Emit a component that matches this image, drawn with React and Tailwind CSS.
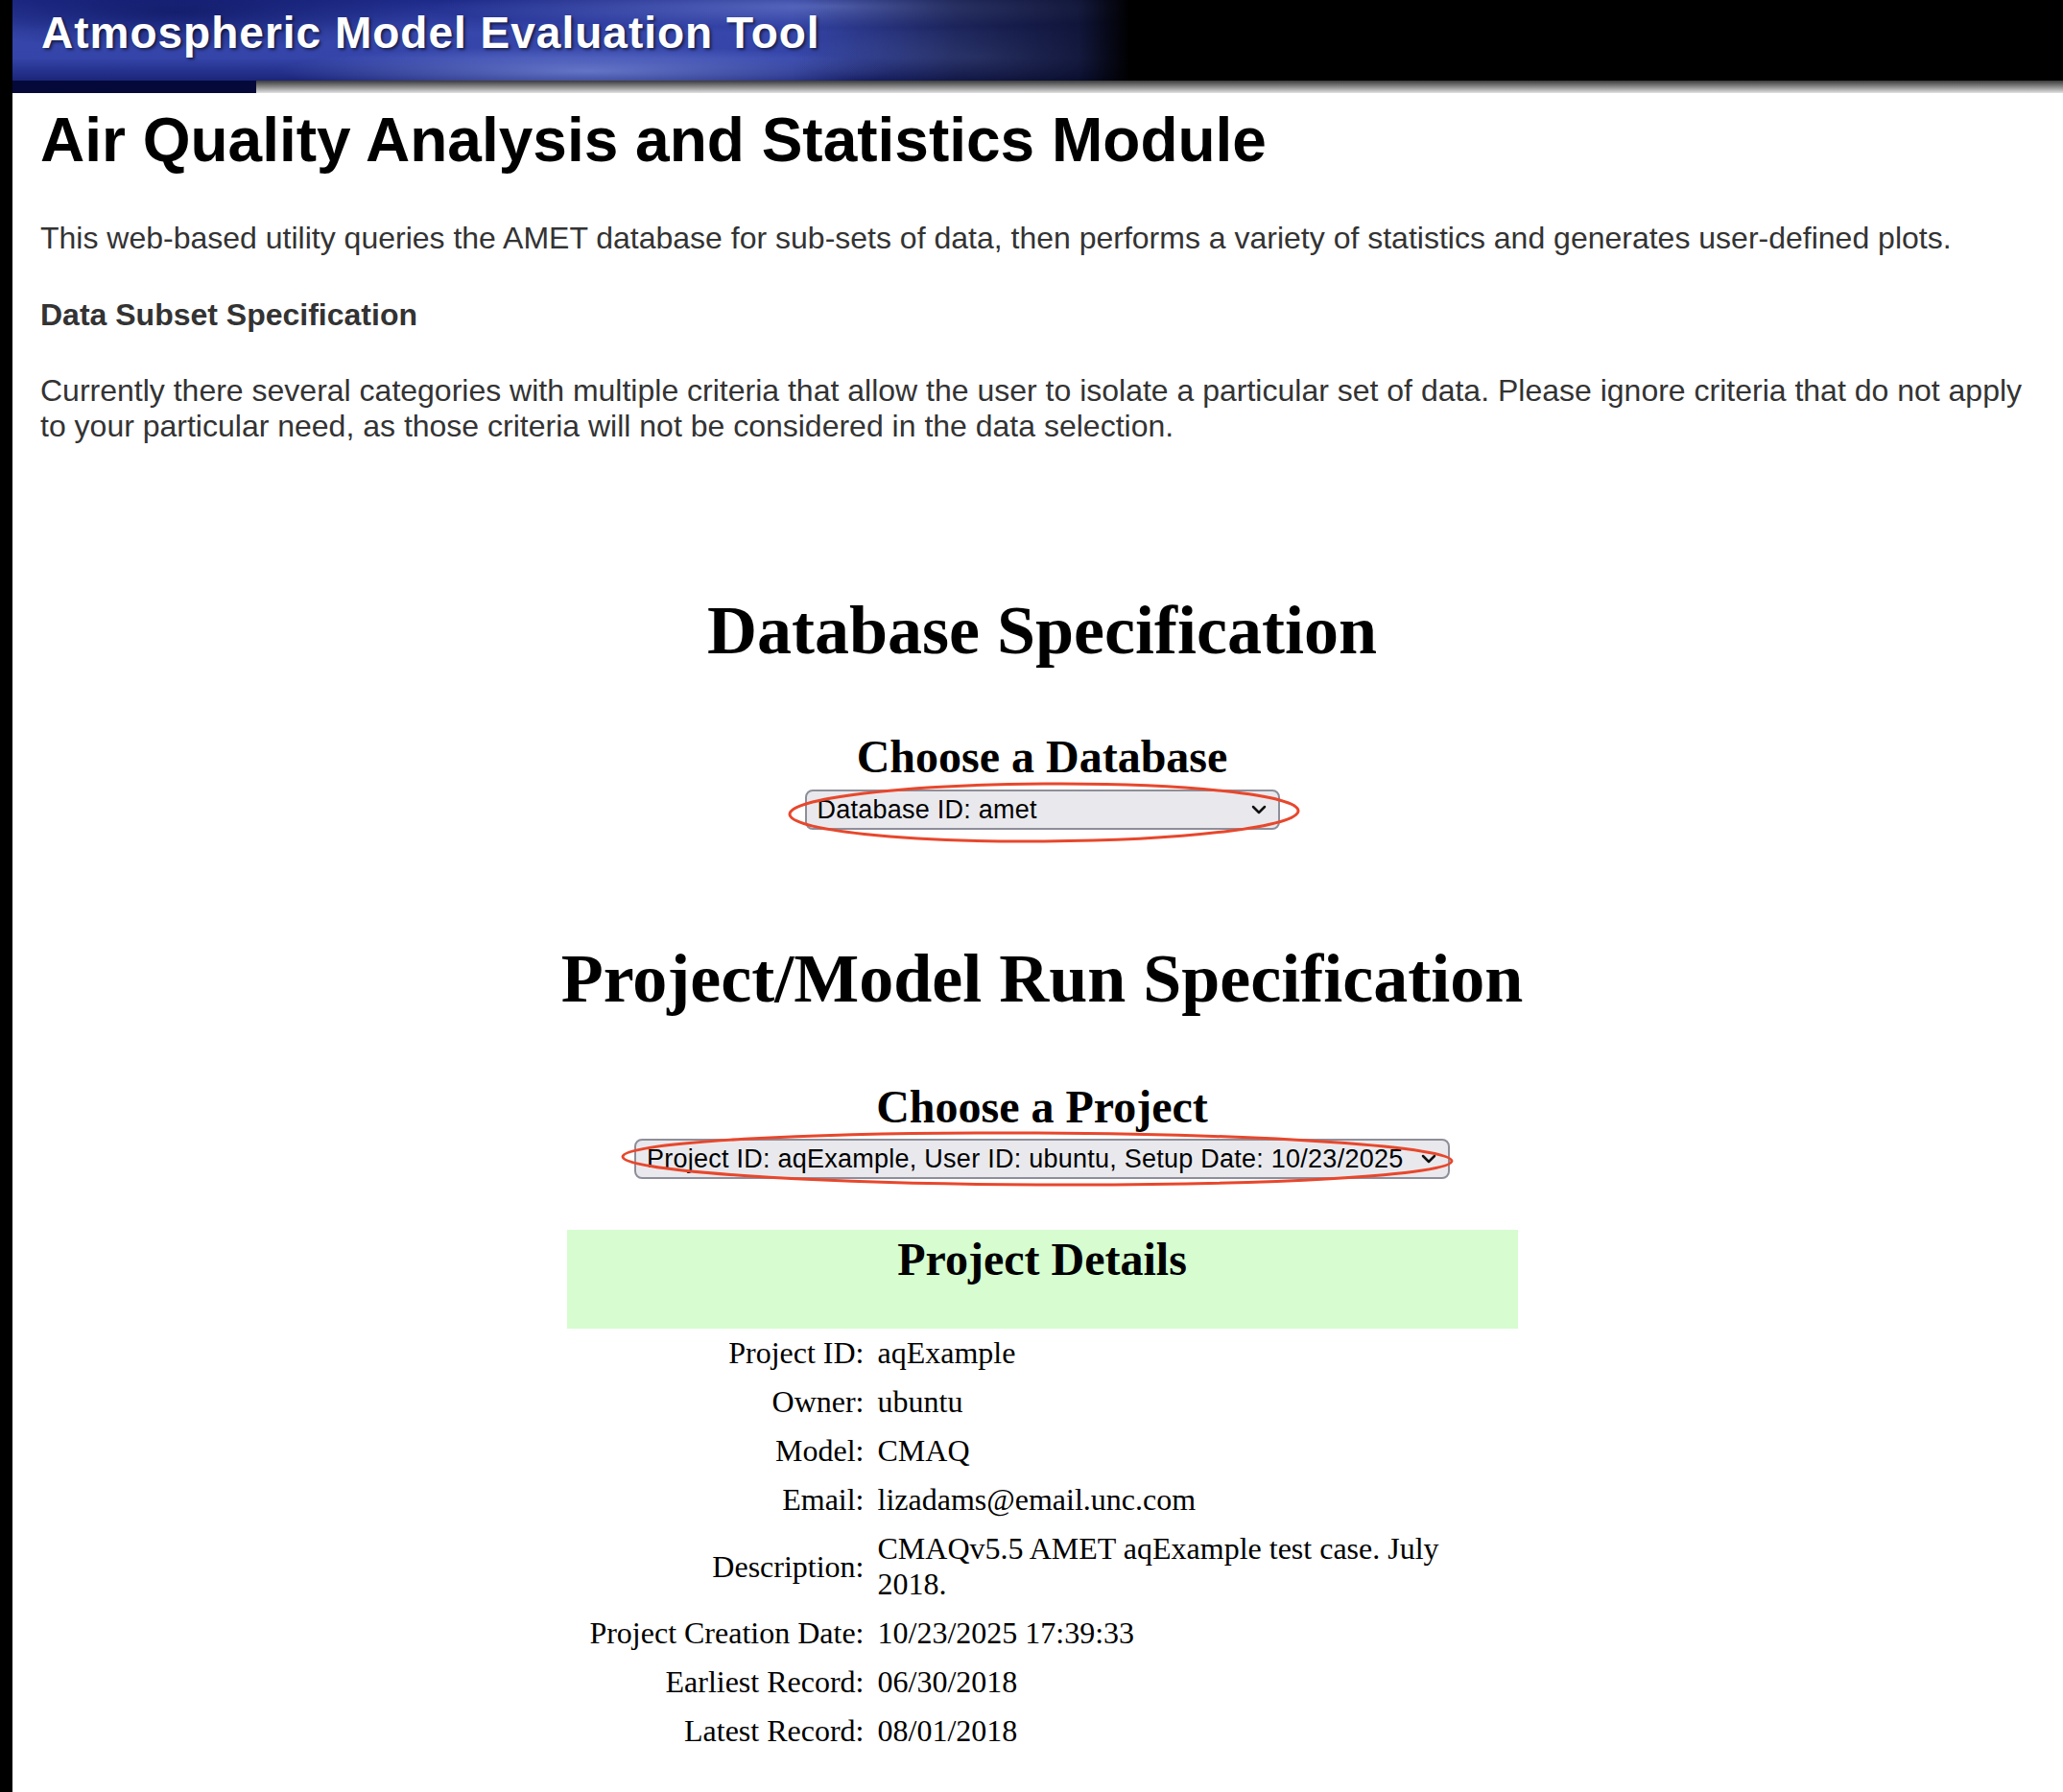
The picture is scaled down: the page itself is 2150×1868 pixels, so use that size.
import React from 'react';

const details = [
  { label: 'Project ID:', value: 'aqExample' },
  { label: 'Owner:', value: 'ubuntu' },
  { label: 'Model:', value: 'CMAQ' },
  { label: 'Email:', value: 'lizadams@email.unc.com' },
  { label: 'Description:', value: 'CMAQv5.5 AMET aqExample test case. July 2018.' },
  { label: 'Project Creation Date:', value: '10/23/2025 17:39:33' },
  { label: 'Earliest Record:', value: '06/30/2018' },
  { label: 'Latest Record:', value: '08/01/2018' },
];

function Banner() {
  return (
    <div>
      <div className="h-[84px] bg-[image:linear-gradient(90deg,rgba(0,0,0,0)_0%,rgba(0,0,0,0)_38%,rgba(0,0,0,0.45)_46%,rgba(0,0,0,0.62)_52%,#000_54.5%),radial-gradient(ellipse_320px_26px_at_28%_88%,rgba(150,170,245,0.55),transparent),radial-gradient(ellipse_420px_22px_at_40%_8%,rgba(140,160,240,0.5),transparent),radial-gradient(ellipse_260px_40px_at_8%_15%,rgba(15,25,100,0.8),transparent),radial-gradient(ellipse_300px_60px_at_60%_50%,rgba(20,30,120,0.7),transparent),radial-gradient(ellipse_200px_30px_at_47%_70%,rgba(120,140,230,0.35),transparent),linear-gradient(180deg,#1e2a88_0%,#3646aa_40%,#3444a8_72%,#1b2579_100%)] pl-[30px] pt-[11px]">
        <div className="text-[46px] leading-none font-bold tracking-[1px] text-white [text-shadow:2px_2px_3px_rgba(0,0,0,0.55)]">
          Atmospheric Model Evaluation Tool
        </div>
      </div>
      <div className="flex h-[13px]">
        <div className="w-[254px] bg-[#05093a]" />
        <div className="flex-1 bg-gradient-to-b from-[#3c3c3c] via-[#8a8a8a] to-[#e2e2e2]" />
      </div>
    </div>
  );
}

function Chevron() {
  return (
    <svg width="16" height="10" viewBox="0 0 16 10" className="shrink-0">
      <polyline points="2,2 8,8 14,2" fill="none" stroke="#111" strokeWidth="2.5" strokeLinecap="round" strokeLinejoin="round" />
    </svg>
  );
}

function FakeSelect({ width, text, ring }) {
  return (
    <div className="flex justify-center">
      <div className={`relative ${width}`}>
        <div className="flex h-[42px] items-center justify-between rounded-[8px] border-2 border-[#8e8e9a] bg-[#e9e9ed] pl-[11px] pr-[12px] font-['Liberation_Sans',Arial,sans-serif] text-[27px] tracking-[0.25px] text-black">
          <span className="whitespace-nowrap">{text}</span>
          <Chevron />
        </div>
        {ring}
      </div>
    </div>
  );
}

export default function App() {
  return (
    <div className="min-h-[1868px] border-l-[13px] border-black bg-white font-['Liberation_Sans',Arial,sans-serif]">
      <Banner />
      <main className="pl-[29px] pr-[20px] pb-[40px]">
        <h1 className="mt-[12px] text-[64px] leading-[74px] font-bold text-black">
          Air Quality Analysis and Statistics Module
        </h1>
        <p className="mt-[47px] text-[32px] leading-[37px] text-[#333]">
          This web-based utility queries the AMET database for sub-sets of data, then performs a variety of statistics and generates user-defined plots.
        </p>
        <h4 className="mt-[43px] text-[32px] leading-[37px] font-bold text-[#333]">Data Subset Specification</h4>
        <p className="mt-[42px] text-[32px] leading-[37px] text-[#333]">
          Currently there several categories with multiple criteria that allow the user to isolate a particular set of data. Please ignore criteria that do not apply to your particular need, as those criteria will not be considered in the data selection.
        </p>

        <section className="font-['Liberation_Serif','Times_New_Roman',serif] text-black">
          <h1 className="mt-[153px] text-center text-[72px] leading-[83px] font-bold">Database Specification</h1>
          <h2 className="mt-[62px] text-center text-[48px] leading-[55px] font-bold">Choose a Database</h2>
          <div className="mt-[7px]">
            <FakeSelect
              width="w-[495px]"
              text="Database ID: amet"
              ring={
                <svg className="pointer-events-none absolute left-[-19px] top-[-9px]" width="537" height="66" viewBox="0 0 537 66">
                  <ellipse cx="268" cy="33" rx="265" ry="30" fill="none" stroke="#e8472c" strokeWidth="3" transform="rotate(-0.4 268 33)" />
                </svg>
              }
            />
          </div>

          <h1 className="mt-[114px] text-center text-[72px] leading-[83px] font-bold">Project/Model Run Specification</h1>
          <h2 className="mt-[64px] text-center text-[48px] leading-[55px] font-bold">Choose a Project</h2>
          <div className="mt-[6px]">
            <FakeSelect
              width="w-[850px]"
              text="Project ID: aqExample, User ID: ubuntu, Setup Date: 10/23/2025"
              ring={
                <svg className="pointer-events-none absolute left-[-15px] top-[-9px]" width="871" height="60" viewBox="0 0 871 60">
                  <ellipse cx="435" cy="30" rx="432" ry="27" fill="none" stroke="#e8472c" strokeWidth="3" transform="rotate(0.3 435 30)" />
                </svg>
              }
            />
          </div>

          <div className="mx-auto mt-[53px] w-[991px]">
            <div className="h-[103px] bg-[#d6fcd0] pt-[3px] text-center">
              <h2 className="text-[48px] leading-[55px] font-bold">Project Details</h2>
            </div>
            <div className="text-[32px] leading-[37px]">
              {details.map((d) => (
                <div key={d.label} className="grid grid-cols-[316px_1fr] items-center py-[7px]">
                  <div className="pr-[6px] text-right whitespace-nowrap">{d.label}</div>
                  <div className="w-[640px] pl-[8px]">{d.value}</div>
                </div>
              ))}
            </div>
          </div>
        </section>
      </main>
    </div>
  );
}
